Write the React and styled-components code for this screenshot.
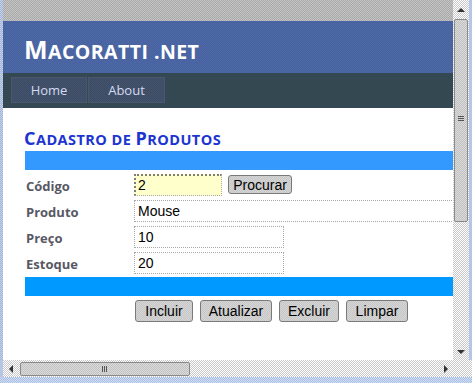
import React from "react";
import styled, { createGlobalStyle, css } from "styled-components";

const Global = createGlobalStyle`
  html, body { margin: 0; padding: 0; background: #fff; }
  body { width: 472px; height: 383px; overflow: hidden; }
`;

const dither = (a, b) => css`
  background: repeating-conic-gradient(${a} 0 25%, ${b} 0 50%) 0 0 / 2px 2px;
`;

const Frame = styled.div`
  width: 472px;
  height: 383px;
  display: grid;
  grid-template-rows: 360px 17px 6px;
  overflow: hidden;
`;

const Main = styled.div`
  display: flex;
  min-height: 0;
`;

const LeftEdge = styled.div`
  width: 3px;
  ${dither("#9fb2d6", "#c8d4ec")}
`;

const Viewport = styled.div`
  width: 450px;
  display: flex;
  flex-direction: column;
  overflow: hidden;
`;

const TopStrip = styled.div`
  height: 21px;
  flex: none;
  ${dither("#c4c4c4", "#a9a9a9")}
`;

const Page = styled.div`
  width: 520px;
  flex: 1;
  background: #fff;
`;

const Header = styled.header`
  height: 52px;
  padding-left: 21px;
  display: flex;
  align-items: center;
  ${dither("#4064ac", "#55679a")}
`;

const Logo = styled.h1`
  margin: 0;
  padding-top: 4px;
  font-family: "Open Sans", sans-serif;
  font-weight: 700;
  font-size: 25px;
  letter-spacing: 0.45px;
  color: #fff;
`;

/* small caps drawn by hand: big capitals, smaller capitals for the rest */
const Sc = styled.span`
  font-size: ${(p) => p.$size}px;
`;

const Nav = styled.nav`
  height: 35px;
  padding: 4px 0 0 8px;
  box-sizing: border-box;
  display: flex;
  align-items: flex-start;
  gap: 1px;
  ${dither("#2f4a4a", "#3a465a")}
`;

const MenuItem = styled.a`
  width: ${(p) => p.$w}px;
  height: 26px;
  box-sizing: border-box;
  border: 1px solid #4a576e;
  display: flex;
  align-items: center;
  justify-content: center;
  font-family: "Open Sans", sans-serif;
  font-size: 13px;
  color: #d4daf2;
  ${dither("#3c4c66", "#44536a")}
`;

const Content = styled.section`
  padding: 19px 0 0 22px;
`;

const Title = styled.h2`
  margin: 0 0 2px -1px;
  height: 22px;
  font-family: "Open Sans", sans-serif;
  font-weight: 700;
  font-size: 18px;
  line-height: 22px;
  letter-spacing: 0.45px;
  color: #1c34d0;
`;

const Bar = styled.div`
  height: 19px;
  background: ${(p) => p.$color};
`;

const Rows = styled.div`
  display: grid;
  grid-template-columns: 109px auto;
  grid-auto-rows: 22px;
  row-gap: 4px;
  padding-top: 4px;
  margin-bottom: 3px;
`;

const Label = styled.label`
  font-family: "Open Sans", sans-serif;
  font-weight: 700;
  font-size: 13px;
  line-height: 22px;
  color: #585864;
  padding: 1px 0 0 1px;
`;

const Field = styled.div`
  display: flex;
  gap: 6px;
  align-items: flex-start;
`;

const Input = styled.div`
  width: ${(p) => p.$w}px;
  height: 22px;
  box-sizing: border-box;
  border: 1px dotted #a8a8a8;
  background: ${(p) => (p.$yellow ? "#ffffcc" : "#fff")};
  padding: 2px 0 0 3px;
  font-family: "Liberation Sans", Arial, sans-serif;
  font-size: 14px;
  color: #000;
  ${(p) =>
    p.$yellow &&
    css`
      border-top: 2px dotted #7c7c7c;
      border-left: 2px dotted #7c7c7c;
      padding: 1px 0 0 2px;
    `}
`;

const Button = styled.button`
  height: ${(p) => (p.$small ? 19 : 22)}px;
  width: ${(p) => p.$w}px;
  padding: 0;
  margin-top: ${(p) => (p.$small ? 1 : 0)}px;
  border: 1px solid #7a7a7a;
  border-radius: 3px;
  font-family: "Liberation Sans", Arial, sans-serif;
  font-size: 14px;
  color: #000;
  ${dither("#d6d6d6", "#c6c6c6")}
`;

const Actions = styled.div`
  display: flex;
  gap: 7px;
  padding: 4px 0 0 110px;
`;

const VScroll = styled.div`
  width: 16px;
  position: relative;
  border-right: 3px solid #b6c6e4;
  ${dither("#ffffff", "#c8c8c8")}
`;

const VThumb = styled.div`
  position: absolute;
  left: 1px;
  top: 19px;
  width: 14px;
  height: 203px;
  box-sizing: border-box;
  border: 1px solid #8a8a8a;
  border-radius: 2px;
  ${dither("#dadada", "#c2c2c2")}
`;

const Grip = styled.div`
  position: absolute;
  display: flex;
  flex-direction: ${(p) => (p.$v ? "column" : "row")};
  gap: 1px;
  ${(p) =>
    p.$v
      ? css`left: 3px; top: 96px;`
      : css`left: 81px; top: 3px;`}
  & > i {
    display: block;
    background: #555;
    ${(p) => (p.$v ? css`width: 6px; height: 1px;` : css`width: 1px; height: 6px;`)}
  }
`;

const Arrow = styled.span`
  position: absolute;
  width: 0;
  height: 0;
  ${(p) => p.$pos}
  ${(p) =>
    p.$dir === "up" &&
    css`border-left: 4px solid transparent; border-right: 4px solid transparent; border-bottom: 4px solid #333;`}
  ${(p) =>
    p.$dir === "down" &&
    css`border-left: 4px solid transparent; border-right: 4px solid transparent; border-top: 4px solid #333;`}
  ${(p) =>
    p.$dir === "left" &&
    css`border-top: 4px solid transparent; border-bottom: 4px solid transparent; border-right: 4px solid #333;`}
  ${(p) =>
    p.$dir === "right" &&
    css`border-top: 4px solid transparent; border-bottom: 4px solid transparent; border-left: 4px solid #333;`}
`;

const HScroll = styled.div`
  position: relative;
  ${dither("#ffffff", "#c8c8c8")}
  border-left: 3px solid #b6c6e4;
`;

const HThumb = styled.div`
  position: absolute;
  left: 17px;
  top: 2px;
  width: 170px;
  height: 14px;
  box-sizing: border-box;
  border: 1px solid #8a8a8a;
  border-radius: 2px;
  ${dither("#dadada", "#c2c2c2")}
`;

const Bottom = styled.div`
  ${dither("#a9c0e4", "#cfdcf2")}
`;

const rows = [
  { label: "Código", value: "2", w: 88, yellow: true, search: true },
  { label: "Produto", value: "Mouse", w: 380 },
  { label: "Preço", value: "10", w: 150 },
  { label: "Estoque", value: "20", w: 150 },
];

const actions = [
  ["Incluir", 58],
  ["Atualizar", 72],
  ["Excluir", 60],
  ["Limpar", 62],
];

export default function App() {
  return (
    <>
      <Global />
      <Frame>
        <Main>
          <LeftEdge />
          <Viewport>
            <TopStrip />
            <Page>
              <Header>
                <Logo>
                  M<Sc $size={19.5}>ACORATTI .NET</Sc>
                </Logo>
              </Header>
              <Nav>
                <MenuItem $w={76}>Home</MenuItem>
                <MenuItem $w={77}>About</MenuItem>
              </Nav>
              <Content>
                <Title>
                  C<Sc $size={14.5}>ADASTRO DE </Sc>P<Sc $size={14.5}>RODUTOS</Sc>
                </Title>
                <Bar $color="#3399ff" />
                <Rows>
                  {rows.map((r) => (
                    <React.Fragment key={r.label}>
                      <Label>{r.label}</Label>
                      <Field>
                        <Input $w={r.w} $yellow={r.yellow}>
                          {r.value}
                        </Input>
                        {r.search && (
                          <Button $small $w={64}>
                            Procurar
                          </Button>
                        )}
                      </Field>
                    </React.Fragment>
                  ))}
                </Rows>
                <Bar $color="#0099ff" />
                <Actions>
                  {actions.map(([t, w]) => (
                    <Button key={t} $w={w}>
                      {t}
                    </Button>
                  ))}
                </Actions>
              </Content>
            </Page>
          </Viewport>
          <VScroll>
            <Arrow $dir="up" $pos="left: 4px; top: 8px;" />
            <VThumb>
              <Grip $v>
                <i />
                <i />
                <i />
              </Grip>
            </VThumb>
            <Arrow $dir="down" $pos="left: 4px; bottom: 6px;" />
          </VScroll>
        </Main>
        <HScroll>
          <Arrow $dir="left" $pos="left: 6px; top: 5px;" />
          <HThumb>
            <Grip>
              <i />
              <i />
              <i />
            </Grip>
          </HThumb>
          <Arrow $dir="right" $pos="left: 441px; top: 5px;" />
        </HScroll>
        <Bottom />
      </Frame>
    </>
  );
}
